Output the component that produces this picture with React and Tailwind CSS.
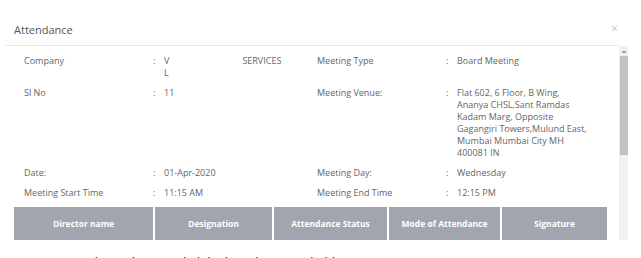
import React from "react";

const font = { fontFamily: '"Open Sans", "Noto Sans", sans-serif' };

function Field({ label, children }) {
  return (
    <div className="flex w-[293px]">
      <div className="w-[129px] shrink-0">{label}</div>
      <div className="w-[11px] shrink-0">:</div>
      <div className="w-[140px]">{children}</div>
    </div>
  );
}

export default function App() {
  const heads = [
    ["Director name", "w-[139px]"],
    ["Designation", "w-[117px]"],
    ["Attendance Status", "w-[113px]"],
    ["Mode of Attendance", "w-[111px]"],
    ["Signature", "flex-1"],
  ];
  return (
    <div className="w-[641px] h-[258px] overflow-hidden bg-white" style={font}>
      <div className="ml-[6px] w-[613px] h-[46px] border-b border-[#e8e8e8] flex items-start justify-between pl-[8px] pr-[1px] pt-[22px]">
        <div className="text-[11px] leading-[15px] text-[#555]">Attendance</div>
        <div className="text-[12px] leading-none text-[#c4c4c4] mt-[1px]">×</div>
      </div>
      <div className="flex">
        <div className="ml-[6px] w-[613px] text-[9px] leading-[12px] text-[#666]">
          <div className="pl-[18px] pt-[9px] flex">
            <Field label="Company">
              <div>
                V<span className="inline-block w-[73px]" />SERVICES
              </div>
              <div>L</div>
            </Field>
            <Field label="Meeting Type">Board Meeting</Field>
          </div>
          <div className="pl-[18px] mt-[8px] flex">
            <Field label="Sl No">11</Field>
            <Field label="Meeting Venue:">
              <div className="w-[136px]">
                Flat 602, 6 Floor, B Wing, Ananya CHSL,Sant Ramdas Kadam Marg, Opposite Gagangiri Towers,Mulund East, Mumbai Mumbai City MH 400081 IN
              </div>
            </Field>
          </div>
          <div className="pl-[18px] mt-[8px] flex">
            <Field label="Date:">01-Apr-2020</Field>
            <Field label="Meeting Day:">Wednesday</Field>
          </div>
          <div className="pl-[18px] mt-[8px] flex">
            <Field label="Meeting Start Time">11:15 AM</Field>
            <Field label="Meeting End Time">12:15 PM</Field>
          </div>
          <div className="ml-[8px] mt-[8px] w-[593px] h-[33px] flex gap-[2px] bg-white">
            {heads.map(([h, w]) => (
              <div
                key={h}
                className={`${w} bg-[#a1a6ae] flex items-center justify-center text-white font-bold text-[8.5px]`}
              >
                {h}
              </div>
            ))}
          </div>
          <div className="mt-[17px] ml-[60px] text-[12px] leading-[12px] text-black whitespace-nowrap">
            Members who attended the board meeting held
          </div>
        </div>
        <div className="w-[9px] h-[194px] bg-[#f1f1f1] flex flex-col items-center">
          <div className="h-[10px] flex items-center justify-center">
            <div className="w-0 h-0 border-l-[3px] border-r-[3px] border-b-[3px] border-l-transparent border-r-transparent border-b-[#a3a3a3]" />
          </div>
          <div className="w-[8px] ml-[1px] h-[99px] bg-[#c1c1c1]" />
        </div>
      </div>
    </div>
  );
}
